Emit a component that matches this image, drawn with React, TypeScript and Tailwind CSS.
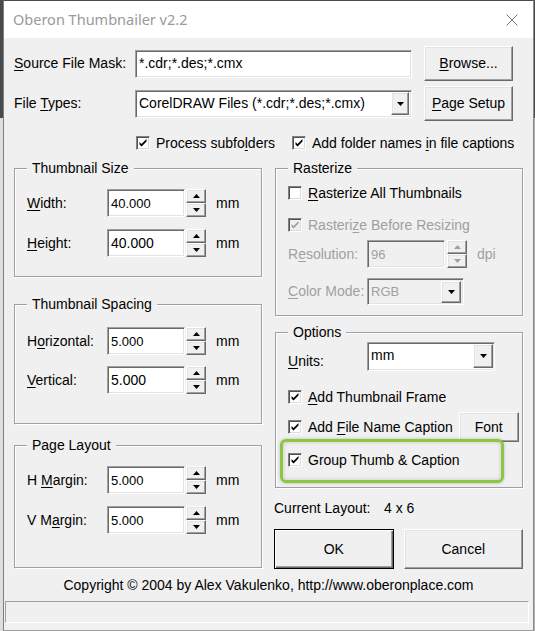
import React from "react";

const raised =
  "border border-t-white border-l-white border-r-[#696969] border-b-[#696969] shadow-[inset_-1px_-1px_0_#a0a0a0,inset_1px_1px_0_#e3e3e3] bg-[#f0f0f0]";
const sunken =
  "border border-t-[#a0a0a0] border-l-[#a0a0a0] border-r-white border-b-white shadow-[inset_1px_1px_0_#696969,inset_-1px_-1px_0_#e3e3e3]";

function U({ children }: { children: React.ReactNode }) {
  return <span className="underline underline-offset-[2px] decoration-1">{children}</span>;
}

function Check({ checked, disabled }: { checked?: boolean; disabled?: boolean }) {
  return (
    <span
      className={`w-[14px] h-[14px] shrink-0 flex items-center justify-center ${
        disabled ? "bg-[#f0f0f0]" : "bg-white"
      } border border-t-[#808080] border-l-[#808080] border-r-white border-b-white shadow-[inset_1px_1px_0_#505050,inset_-1px_-1px_0_#dcdcdc]`}
    >
      {checked && (
        <svg width="8" height="8" viewBox="0 0 8 8">
          <polygon points="0.5,3 2.5,5 7.5,0 7.5,2.6 2.5,7.6 0.5,5.6" fill={disabled ? "#a0a0a0" : "#000"} />
        </svg>
      )}
    </span>
  );
}

function Tri({ up, color = "#000" }: { up?: boolean; color?: string }) {
  return (
    <svg width="7" height="4" viewBox="0 0 7 4">
      {up ? <path d="M3.5 0 L7 4 L0 4Z" fill={color} /> : <path d="M0 0 L7 0 L3.5 4Z" fill={color} />}
    </svg>
  );
}

function Spin({ disabled }: { disabled?: boolean }) {
  const c = disabled ? "#a0a0a0" : "#000";
  return (
    <div className="flex flex-col w-[20px] h-[28px]">
      <div className={`flex-1 ${raised} flex items-center justify-center`}>
        <Tri up color={c} />
      </div>
      <div className={`flex-1 ${raised} flex items-center justify-center`}>
        <Tri color={c} />
      </div>
    </div>
  );
}

function DropBtn({ w, h }: { w: number; h: number }) {
  return (
    <div className={`${raised} flex items-center justify-center shrink-0`} style={{ width: w, height: h }}>
      <Tri />
    </div>
  );
}

function Group({
  title,
  className,
  children,
}: {
  title: string;
  className: string;
  children: React.ReactNode;
}) {
  return (
    <div
      className={`relative border border-[#a0a0a0] shadow-[inset_1px_1px_0_#fff,1px_1px_0_#fff] ${className}`}
    >
      <span className="absolute left-[12px] top-[-9px] px-[5px] bg-[#f0f0f0] leading-[17px] whitespace-nowrap">
        {title}
      </span>
      {children}
    </div>
  );
}

function NumRow({
  label,
  value,
  big,
}: {
  label: React.ReactNode;
  value: string;
  big?: boolean;
}) {
  return (
    <div className="flex items-center h-[28px]">
      <span className="w-[80px] shrink-0">{label}</span>
      <div
        className={`w-[78px] h-[28px] bg-white ${sunken} flex items-center pl-[3px] ${
          big ? "text-[14px]" : "text-[13px]"
        }`}
      >
        {value}
      </div>
      <div className="ml-[1px]">
        <Spin />
      </div>
      <span className="ml-[10px]">mm</span>
    </div>
  );
}

export default function App() {
  return (
    <div className="w-[535px] h-[631px] flex overflow-hidden bg-[#4a4a4a] font-['Liberation_Sans',Arial,sans-serif] text-[14px] leading-[17px] text-black whitespace-nowrap">
      <div className="w-[3px] flex flex-col">
        <div className="h-[118px] bg-[#4a4a4a]" />
        <div className="flex-1 bg-[#dedede]" />
      </div>
      <div className="w-[531px] h-[631px] flex flex-col bg-[#f0f0f0] border border-t-[#4a4a4a] border-l-[#808080] border-r-[#8a8a8a] border-b-[#a0a0a0]">
        {/* Title bar */}
        <div className="h-[37px] shrink-0 bg-white flex items-center pl-[9px] pr-[15px]">
          <span className="font-['Noto_Sans',sans-serif] text-[14.5px] text-[#9a9a9a]">
            Oberon Thumbnailer v2.2
          </span>
          <svg className="ml-auto" width="12" height="12" viewBox="0 0 12 12">
            <path d="M0.5 0.5 L11.5 11.5 M11.5 0.5 L0.5 11.5" stroke="#7a7a7a" strokeWidth="1" />
          </svg>
        </div>

        {/* Body */}
        <div className="flex-1 flex flex-col">
          <div className="pl-[10px] flex flex-col">
            {/* Row 1 */}
            <div className="mt-[8px] h-[35px] flex items-center">
              <span className="w-[121px] shrink-0">
                <U>S</U>ource File Mask:
              </span>
              <div className={`w-[277px] h-[28px] bg-white ${sunken} flex items-center pl-[3px]`}>
                *.cdr;*.des;*.cmx
              </div>
              <div className={`ml-[12px] w-[89px] h-[35px] ${raised} flex items-center justify-center`}>
                <span>
                  <U>B</U>rowse...
                </span>
              </div>
            </div>
            {/* Row 2 */}
            <div className="mt-[5px] h-[35px] flex items-center">
              <span className="w-[121px] shrink-0">
                File <U>T</U>ypes:
              </span>
              <div className={`w-[277px] h-[28px] bg-white ${sunken} flex items-center pl-[3px] pr-[2px]`}>
                <span className="flex-1">CorelDRAW Files (*.cdr;*.des;*.cmx)</span>
                <DropBtn w={18} h={23} />
              </div>
              <div className={`ml-[12px] w-[89px] h-[35px] ${raised} flex items-center justify-center`}>
                <span>
                  <U>P</U>age Setup
                </span>
              </div>
            </div>
            {/* Row 3 */}
            <div className="mt-[12px] h-[20px] flex items-center">
              <div className="ml-[122px] w-[156px] flex items-center gap-[6px]">
                <Check checked />
                <span>
                  Process subfo<U>l</U>ders
                </span>
              </div>
              <div className="flex items-center gap-[6px]">
                <Check checked />
                <span>
                  Add folder names <U>i</U>n file captions
                </span>
              </div>
            </div>

            {/* Columns */}
            <div className="mt-[15px] flex gap-[13px]">
              {/* Left column */}
              <div className="w-[248px] flex flex-col">
                <Group title="Thumbnail Size" className="h-[109px] pt-[20px] pl-[12px] flex flex-col gap-[12px]">
                  <NumRow
                    label={
                      <>
                        <U>W</U>idth:
                      </>
                    }
                    value="40.000"
                  />
                  <NumRow
                    label={
                      <>
                        <U>H</U>eight:
                      </>
                    }
                    value="40.000"
                    big
                  />
                </Group>
                <Group
                  title="Thumbnail Spacing"
                  className="mt-[27px] h-[120px] pt-[22px] pl-[12px] flex flex-col gap-[11px]"
                >
                  <NumRow
                    label={
                      <>
                        H<U>o</U>rizontal:
                      </>
                    }
                    value="5.000"
                  />
                  <NumRow
                    label={
                      <>
                        <U>V</U>ertical:
                      </>
                    }
                    value="5.000"
                    big
                  />
                </Group>
                <Group title="Page Layout" className="mt-[21px] h-[123px] pt-[20px] pl-[12px] flex flex-col gap-[12px]">
                  <NumRow
                    label={
                      <>
                        H <U>M</U>argin:
                      </>
                    }
                    value="5.000"
                  />
                  <NumRow
                    label={
                      <>
                        V M<U>a</U>rgin:
                      </>
                    }
                    value="5.000"
                  />
                </Group>
              </div>

              {/* Right column */}
              <div className="w-[248px] flex flex-col">
                <Group title="Rasterize" className="h-[148px] pt-[14px] pl-[12px] flex flex-col">
                  <div className="h-[20px] flex items-center gap-[6px]">
                    <Check />
                    <span>
                      <U>R</U>asterize All Thumbnails
                    </span>
                  </div>
                  <div className="mt-[12px] h-[20px] flex items-center gap-[6px] text-[#a0a0a0]">
                    <Check checked disabled />
                    <span>
                      Rasteri<U>z</U>e Before Resizing
                    </span>
                  </div>
                  <div className="mt-[5px] h-[28px] flex items-center text-[#a0a0a0]">
                    <span className="w-[79px] shrink-0">
                      R<U>e</U>solution:
                    </span>
                    <div className={`w-[78px] h-[28px] bg-[#f0f0f0] ${sunken} flex items-center pl-[3px] text-[13px]`}>
                      96
                    </div>
                    <div className="ml-[2px]">
                      <Spin disabled />
                    </div>
                    <span className="ml-[10px]">dpi</span>
                  </div>
                  <div className="mt-[10px] h-[27px] flex items-center text-[#a0a0a0]">
                    <span className="w-[79px] shrink-0">
                      <U>C</U>olor Mode:
                    </span>
                    <div className={`w-[97px] h-[27px] bg-[#f0f0f0] ${sunken} flex items-center pl-[3px] pr-[2px] text-[13px]`}>
                      <span className="flex-1">RGB</span>
                      <DropBtn w={20} h={22} />
                    </div>
                  </div>
                </Group>

                <Group title="Options" className="mt-[16px] h-[156px] pt-[9px] pl-[12px] flex flex-col">
                  <div className="h-[29px] flex items-start">
                    <span className="w-[79px] shrink-0 pt-[11px]">
                      <U>U</U>nits:
                    </span>
                    <div className={`w-[128px] h-[29px] bg-white ${sunken} flex items-start pl-[3px] pr-[1px] pt-[1px]`}>
                      <span className="flex-1 pt-[3px]">mm</span>
                      <DropBtn w={20} h={24} />
                    </div>
                  </div>
                  <div className="mt-[16px] h-[20px] flex items-center gap-[6px]">
                    <Check checked />
                    <span>
                      <U>A</U>dd Thumbnail Frame
                    </span>
                  </div>
                  <div className="mt-[5px] h-[30px] flex items-center gap-[6px] pr-[5px]">
                    <Check checked />
                    <span className="whitespace-nowrap">
                      Add <U>F</U>ile Name Caption
                    </span>
                    <div className={`ml-auto shrink-0 w-[60px] h-[30px] ${raised} flex items-center justify-center`}>
                      Font
                    </div>
                  </div>
                  <div className="mt-[8px] h-[20px] flex items-center gap-[6px]">
                    <Check checked />
                    <span>Group Thumb &amp; Caption</span>
                  </div>
                  <div className="absolute left-[4px] top-[106px] w-[224px] h-[44px] rounded-[6px] border-[3px] border-[#8dc63f] shadow-[inset_0_0_4px_rgba(0,0,0,0.18),0_0_3px_rgba(0,0,0,0.25)] pointer-events-none" />
                </Group>

                <div className="h-[41px] flex items-center ml-[-1px]">
                  <span className="w-[110px]">Current Layout:</span>
                  <span>4 x 6</span>
                </div>
                <div className="h-[40px] flex gap-[10px] ml-[-1px]">
                  <div className="w-[120px] h-[40px] border border-black shadow-[inset_1px_1px_0_#fff,inset_-1px_-1px_0_#696969,inset_-2px_-2px_0_#a0a0a0] bg-[#f0f0f0] flex items-center justify-center">
                    OK
                  </div>
                  <div className={`w-[120px] h-[40px] ${raised} flex items-center justify-center`}>Cancel</div>
                </div>
              </div>
            </div>
          </div>

          {/* Copyright */}
          <div className="h-[32px] flex items-center justify-center">
            Copyright © 2004 by Alex Vakulenko, http://www.oberonplace.com
          </div>

          {/* Status bar */}
          <div className="ml-[1px] w-[524px] h-[22px] border border-t-[#a0a0a0] border-l-[#a0a0a0] border-r-white border-b-white bg-[#f0f0f0]" />
          <div className="flex-1" />
        </div>
      </div>
      <div className="w-[1px] flex flex-col">
        <div className="h-[118px] bg-[#4a4a4a]" />
        <div className="flex-1 bg-[#b0b0b0]" />
      </div>
    </div>
  );
}
